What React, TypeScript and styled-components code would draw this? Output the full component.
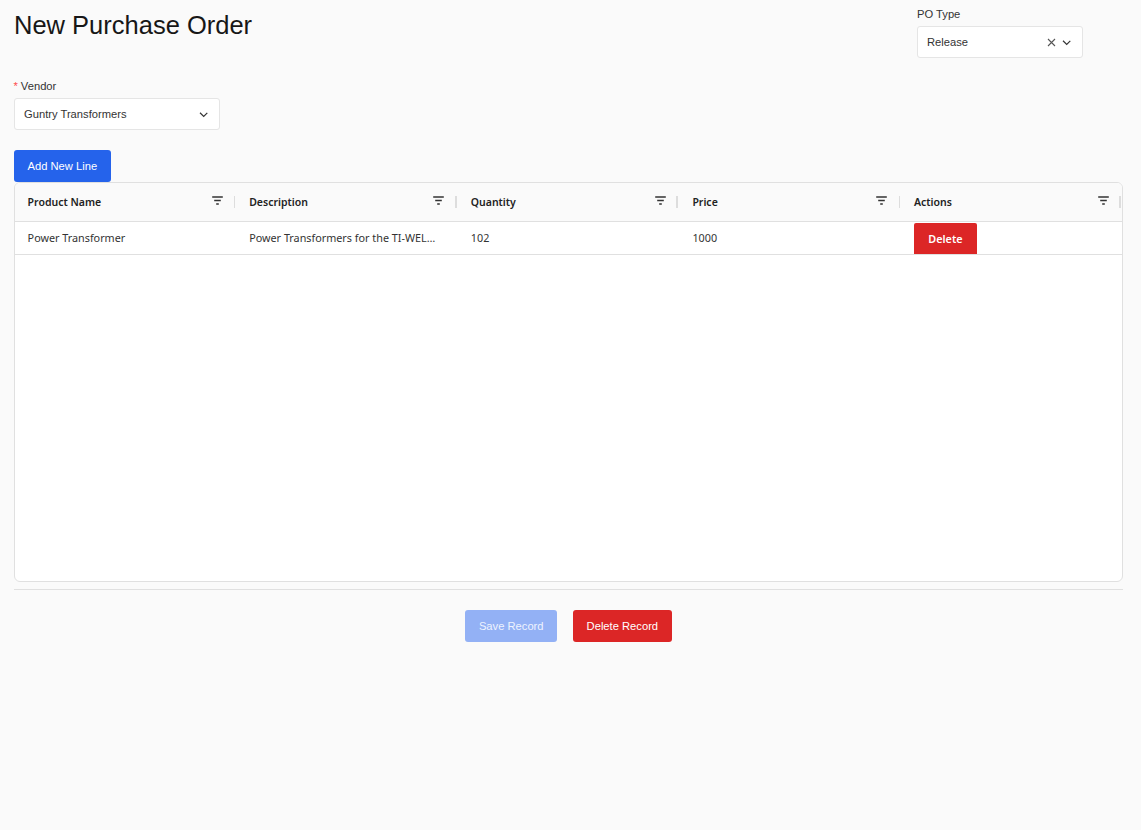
import React from "react";
import styled, { createGlobalStyle } from "styled-components";

const GlobalStyle = createGlobalStyle`
  html, body {
    margin: 0;
    padding: 0;
    background: #fafafa;
    font-family: "Liberation Sans", Arial, sans-serif;
  }
`;

const Page = styled.main`
  width: 1141px;
  height: 830px;
  box-sizing: border-box;
  padding: 0 18px 0 14px;
  background: #fafafa;
  color: #171717;
`;

const TopRow = styled.div`
  display: flex;
  justify-content: space-between;
  align-items: flex-start;
  height: 72px;
  padding: 8px 40px 0 0;
`;

const Title = styled.h1`
  margin: 0;
  font-size: 25.5px;
  line-height: 34px;
  font-weight: 400;
  color: #171717;
`;

const Field = styled.div<{ $width: number }>`
  width: ${({ $width }) => $width}px;
`;

const Label = styled.label`
  display: block;
  height: 12px;
  margin-bottom: 6px;
  font-size: 11.2px;
  line-height: 12px;
  color: #333;
`;

const Required = styled.span`
  color: #ff4d4f;
  margin-right: 3px;
  margin-left: -0.5px;
`;

const SelectBox = styled.div`
  display: flex;
  align-items: center;
  height: 32px;
  box-sizing: border-box;
  padding: 0 11px 0 9px;
  background: #fff;
  border: 1px solid #e5e5e5;
  border-radius: 3px;
  font-size: 11.2px;
  color: #333;
`;

const SelectValue = styled.span`
  flex: 1;
`;

const ClearIcon = styled.svg`
  width: 9px;
  height: 9px;
  margin-right: 6px;
  color: #555;
`;

const ChevronIcon = styled.svg`
  width: 9px;
  height: 9px;
  color: #333;
`;

const Button = styled.button<{ $bg: string; $fg?: string }>`
  height: 32px;
  padding: 0 13.5px;
  border: 0;
  border-radius: 3px;
  background: ${({ $bg }) => $bg};
  color: ${({ $fg }) => $fg || "#fff"};
  font-family: inherit;
  font-size: 11.2px;
`;

const AddRow = styled.div`
  display: flex;
  margin-top: 20px;
`;

const TableFrame = styled.div`
  height: 400px;
  box-sizing: border-box;
  border: 1px solid #e0e0e0;
  border-radius: 6px;
  background: #fff;
  overflow: hidden;
  font-family: "Noto Sans", "Open Sans", sans-serif;
  font-size: 10.5px;
`;

const Row = styled.div<{ $head?: boolean }>`
  display: grid;
  grid-template-columns: repeat(5, 221.6px);
  height: ${({ $head }) => ($head ? 39 : 33)}px;
  box-sizing: border-box;
  border-bottom: 1px solid #e0e0e0;
  background: ${({ $head }) => ($head ? "#fafafa" : "#fff")};
`;

const HeadCell = styled.div`
  position: relative;
  display: flex;
  align-items: center;
  justify-content: space-between;
  padding: 0 14px 0 12.6px;
  font-weight: 600;
  color: #222;
`;

const Separator = styled.span<{ $thick?: boolean }>`
  position: absolute;
  right: 1.5px;
  top: 13px;
  width: ${({ $thick }) => ($thick ? 2 : 1)}px;
  height: 12px;
  background: #ddd;
`;

const FilterIcon = styled.svg`
  width: 11px;
  height: 9px;
  margin-top: -3px;
  color: #333;
`;

const Cell = styled.div`
  display: flex;
  align-items: center;
  padding: 0 12.6px 2px;
  min-width: 0;
  font-size: 10.8px;
  color: #333;
  white-space: nowrap;
`;

const DescriptionCell = styled(Cell)`
  padding-right: 19px;
`;

const ActionCell = styled(Cell)`
  padding-bottom: 0;
`;

const Truncated = styled.span`
  overflow: hidden;
  text-overflow: ellipsis;
`;

const RowDelete = styled.button`
  align-self: flex-end;
  width: 63px;
  height: 31px;
  border: 0;
  border-radius: 2px 2px 0 0;
  background: #dc2626;
  color: #fff;
  font-family: inherit;
  font-size: 10.8px;
  font-weight: 600;
`;

const Footer = styled.div`
  display: flex;
  justify-content: center;
  gap: 16px;
  margin-top: 7px;
  padding: 20px 0 0 0;
  border-top: 1px solid #e0e0e0;
`;

const columns = ["Product Name", "Description", "Quantity", "Price", "Actions"];

const Chevron = () => (
  <ChevronIcon viewBox="0 0 9 9" fill="none" stroke="currentColor" strokeWidth="1.2">
    <path d="M1 2.8 4.7 6.4l3.6-3.6" />
  </ChevronIcon>
);

const Filter = () => (
  <FilterIcon viewBox="0 0 11 9" fill="none" stroke="currentColor" strokeWidth="1.3">
    <path d="M.2 1h10.6M2.2 4.5h6.6M4.2 8h2.6" />
  </FilterIcon>
);

export default function App() {
  return (
    <Page>
      <GlobalStyle />
      <TopRow>
        <Title>New Purchase Order</Title>
        <Field $width={166}>
          <Label>PO Type</Label>
          <SelectBox>
            <SelectValue>Release</SelectValue>
            <ClearIcon viewBox="0 0 9 9" fill="none" stroke="currentColor" strokeWidth="1.1">
              <path d="M1 1l7 7M8 1 1 8" />
            </ClearIcon>
            <Chevron />
          </SelectBox>
        </Field>
      </TopRow>

      <Field $width={206}>
        <Label>
          <Required>*</Required>Vendor
        </Label>
        <SelectBox>
          <SelectValue>Guntry Transformers</SelectValue>
          <Chevron />
        </SelectBox>
      </Field>

      <AddRow>
        <Button $bg="#2563eb">Add New Line</Button>
      </AddRow>

      <TableFrame>
        <Row $head>
          {columns.map((name, i) => (
            <HeadCell key={name}>
              {name}
              <Filter />
              <Separator $thick={i === 1 || i === 2 || i === 4} />
            </HeadCell>
          ))}
        </Row>
        <Row>
          <Cell>Power Transformer</Cell>
          <DescriptionCell>
            <Truncated>Power Transformers for the TI-WELL Substation Project</Truncated>
          </DescriptionCell>
          <Cell>102</Cell>
          <Cell>1000</Cell>
          <ActionCell>
            <RowDelete>Delete</RowDelete>
          </ActionCell>
        </Row>
      </TableFrame>

      <Footer>
        <Button $bg="#93b1f5" $fg="#eef3fe">Save Record</Button>
        <Button $bg="#dc2626">Delete Record</Button>
      </Footer>
    </Page>
  );
}
